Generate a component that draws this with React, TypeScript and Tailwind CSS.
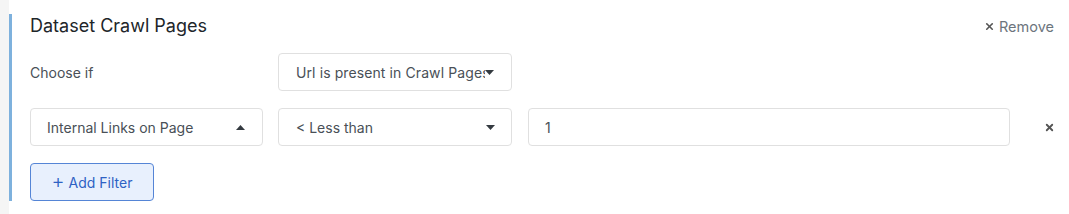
import { X } from 'lucide-react'

// Filter card: [title / remove] [choose-if row] [filter row] [add filter]

function Caret({ up = false }: { up?: boolean }) {
  return (
    <svg width="9" height="5" viewBox="0 0 9 5" aria-hidden="true" className="flex-shrink-0">
      {up ? <path d="M0 5 L4.5 0 L9 5 Z" fill="#343a40" /> : <path d="M0 0 L9 0 L4.5 5 Z" fill="#343a40" />}
    </svg>
  )
}

export default function App() {
  return (
    <div className="flex w-[1069px] h-[214px] bg-white font-['Inter',sans-serif]">
      <div className="w-[9px] bg-[#f5f5f5] flex-shrink-0" />
      <div className="flex-1 pt-[14px]">
        <div className="border-l-[3px] border-[#7eb1dd] pl-[18px] pr-[17px] h-[187px]">
          <div className="flex items-center justify-between h-[24px]">
            <h2 className="text-[18px] text-[#212529] leading-none">Dataset Crawl Pages</h2>
            <button className="flex items-center gap-[4px] text-[14.5px] text-[#6c757d] mt-[1px] mr-[1px]">
              <X className="w-[11px] h-[11px]" strokeWidth={3.5} color="#555" />
              Remove
            </button>
          </div>

          <div className="flex items-center mt-[15px] h-[38px]">
            <span className="w-[248px] text-[14px] text-[#495057]">Choose if</span>
            <div className="w-[234px] h-[38px] border border-[#e0e0e0] rounded-[4px] flex items-center pl-[17px] text-[14px] text-[#495057]">
              <span className="w-[189px] whitespace-nowrap overflow-hidden tracking-[0.1px]">Url is present in Crawl Pages</span>
              <Caret />
            </div>
          </div>

          <div className="flex items-center mt-[17px] h-[38px]">
            <div className="w-[233px] h-[38px] border border-[#e0e0e0] rounded-[4px] flex items-center justify-between pl-[16px] pr-[17px] text-[14px] text-[#495057]">
              <span>Internal Links on Page</span>
              <Caret up />
            </div>
            <div className="ml-[15px] w-[234px] h-[38px] border border-[#e0e0e0] rounded-[4px] flex items-center justify-between pl-[17px] pr-[16px] text-[14px] text-[#495057]">
              <span>&lt; Less than</span>
              <Caret />
            </div>
            <div className="ml-[16px] w-[482px] h-[38px] border border-[#e0e0e0] rounded-[4px] flex items-center pl-[16px] text-[14px] text-[#495057]">
              1
            </div>
            <X className="ml-[34px] w-[11px] h-[11px]" strokeWidth={4} color="#555" />
          </div>

          <button className="mt-[17px] w-[124px] h-[38px] rounded-[4px] border border-[#5585d6] bg-[#e8f0fd] text-[#2e62c4] text-[14px] flex items-center justify-center gap-[4px]">
            <span className="text-[20px] font-light leading-none -mt-[2px]">+</span>
            Add Filter
          </button>
        </div>
      </div>
    </div>
  )
}
